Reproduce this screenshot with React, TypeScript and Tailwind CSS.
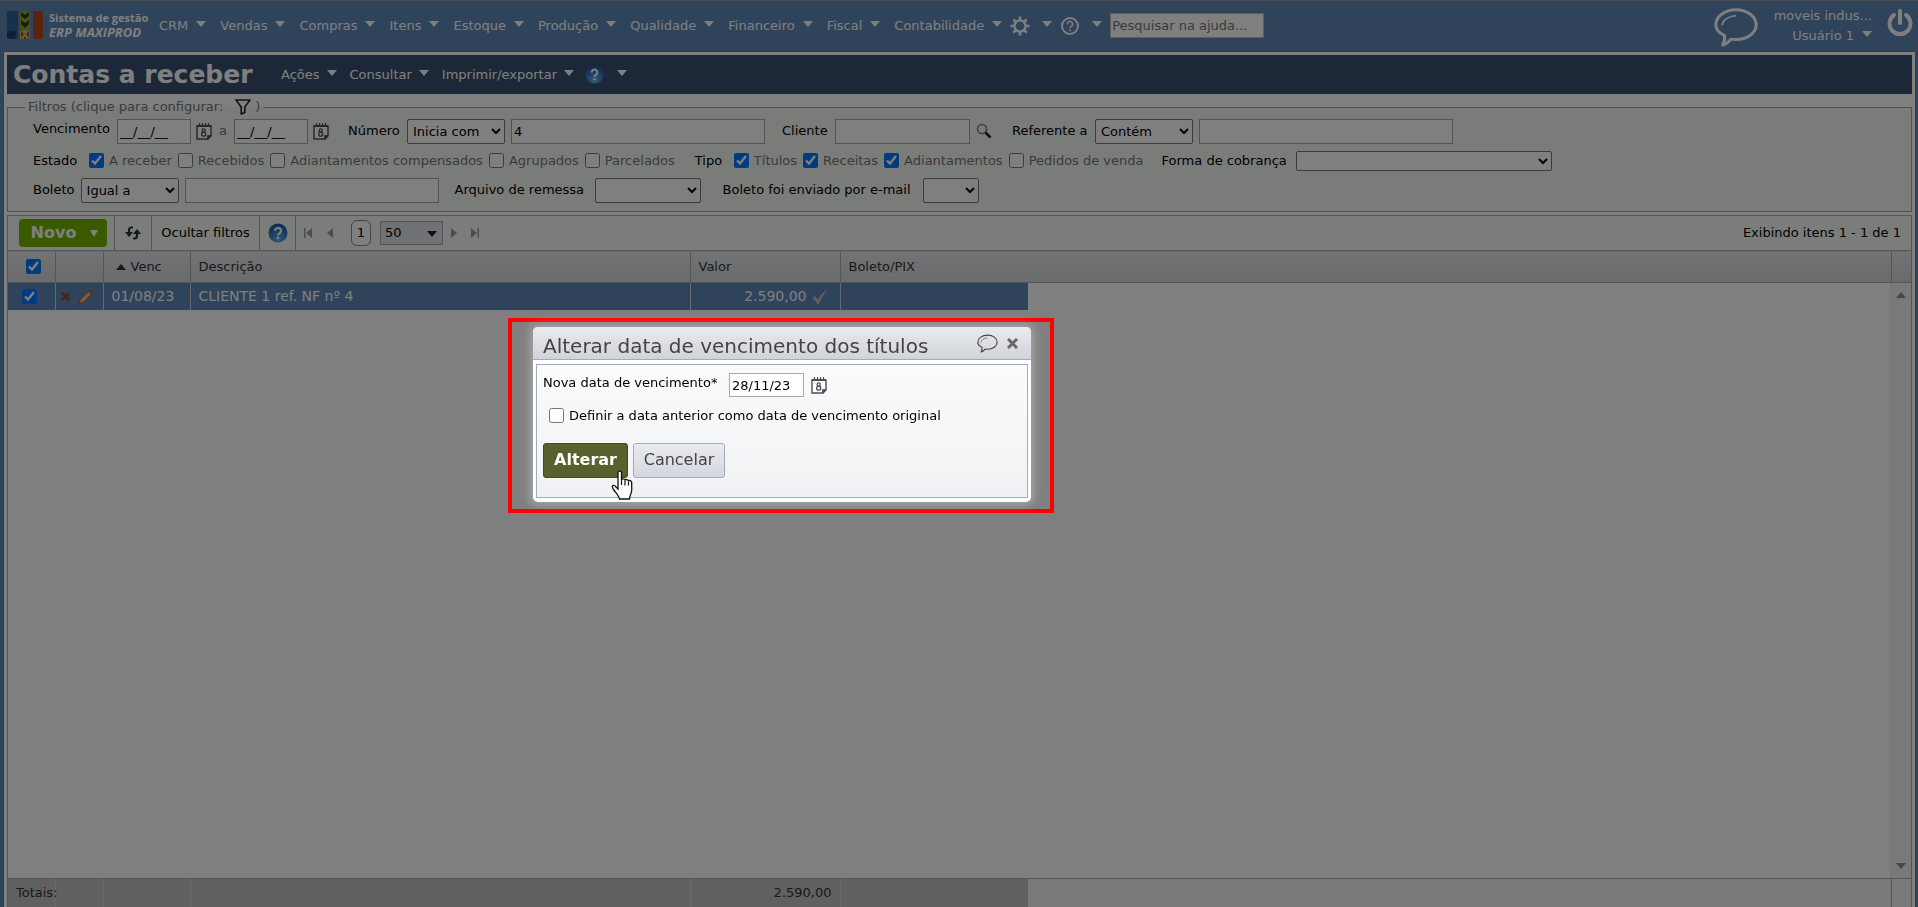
import { useState } from 'react'
import type { ReactNode } from 'react'
import clsx from 'clsx'

const MENU = [
  'CRM',
  'Vendas',
  'Compras',
  'Itens',
  'Estoque',
  'Produção',
  'Qualidade',
  'Financeiro',
  'Fiscal',
  'Contabilidade',
]

const PAGE_MENU = ['Ações', 'Consultar', 'Imprimir/exportar']

const ESTADOS = [
  { label: 'A receber', checked: true },
  { label: 'Recebidos', checked: false },
  { label: 'Adiantamentos compensados', checked: false },
  { label: 'Agrupados', checked: false },
  { label: 'Parcelados', checked: false },
]

const TIPOS = [
  { label: 'Títulos', checked: true },
  { label: 'Receitas', checked: true },
  { label: 'Adiantamentos', checked: true },
  { label: 'Pedidos de venda', checked: false },
]

function Caret({ className = '' }: { className?: string }) {
  return (
    <svg viewBox="0 0 10 6" className={clsx('w-[10px] h-[6px] shrink-0', className)} fill="currentColor">
      <path d="M0 0h10L5 6z" />
    </svg>
  )
}

function Logo() {
  return (
    <svg viewBox="0 0 36 28" className="w-9 h-7 shrink-0">
      <rect x="0" y="0" width="11" height="28" rx="2" fill="#2f6096" />
      <path d="M0 20h9v8H2a2 2 0 0 1-2-2z" fill="#1c4472" />
      <path d="M3 23h2v2H3zM6 21h2v2H6z" fill="#0c2c68" />
      <rect x="13" y="0" width="10" height="18" rx="2" fill="#96a81c" />
      <path d="M14 1l4 3 4-3v4l-4 3-4-3zM14 9l4 3 4-3v4l-4 4-4-4z" fill="#2c3a1c" />
      <rect x="13" y="19" width="10" height="9" rx="2" fill="#e0b050" />
      <path d="M14 20l3 3-3 4zM22 20l-3 3 3 4zM17 26h2v2h-2z" fill="#7a5a3c" />
      <rect x="26" y="0" width="10" height="28" rx="2" fill="#b8481c" />
    </svg>
  )
}

function GearIcon() {
  return (
    <svg viewBox="0 0 20 20" className="w-5 h-5" fill="none" stroke="currentColor">
      <circle cx="10" cy="10" r="5.600" strokeWidth="2.400" />
      <g strokeWidth="2.600">
        <path d="M10 .5v3.500M10 16v3.500M.5 10H4M16 10h3.500M3.300 3.300l2.400 2.400M14.300 14.300l2.400 2.400M3.300 16.700l2.400-2.400M14.300 5.700l2.400-2.400" />
      </g>
    </svg>
  )
}

function HelpOutline() {
  return (
    <svg viewBox="0 0 20 20" className="w-5 h-5" fill="none" stroke="currentColor" strokeWidth="2">
      <circle cx="10" cy="10" r="8" />
      <path d="M7.400 8.200a2.600 2.600 0 1 1 3.900 2.200c-.9.500-1.300.9-1.300 2" strokeWidth="1.500" />
      <path d="M10 13.600v1.700" strokeWidth="1.500" />
    </svg>
  )
}

function HelpBall({ className }: { className: string }) {
  return (
    <svg viewBox="0 0 20 20" className={className}>
      <defs>
        <radialGradient id="ball" cx="50%" cy="85%" r="80%">
          <stop offset="0" stopColor="#5fb4f0" />
          <stop offset="1" stopColor="#1c56a0" />
        </radialGradient>
      </defs>
      <circle cx="10" cy="10" r="9.500" fill="url(#ball)" />
      <path d="M7 7.800a3 3 0 1 1 4.500 2.600c-1 .6-1.500 1-1.500 2.100" fill="none" stroke="#fff" strokeWidth="2.200" />
      <circle cx="10" cy="15" r="1.300" fill="#fff" />
    </svg>
  )
}

function Bubble({ className, width = 3 }: { className: string; width?: number }) {
  return (
    <svg viewBox="0 0 44 39" className={className} fill="none" stroke="currentColor" strokeWidth={width}>
      <path
        d="M10.500 27.500C5 25 1.800 21 1.800 16.800 1.800 8.500 10.800 1.800 22 1.800s20.200 6.700 20.200 15S33.200 31.500 22 31.500c-1.800 0-3.500-.1-5-.4-2.200 2.800-5 4.900-8.300 6 1.600-2.900 2.300-6 1.800-9.600z"
        strokeLinejoin="round"
      />
      <path d="M8 17.500c.5-5 6-9.500 14-9.800" strokeWidth={width * 0.55} />
    </svg>
  )
}

function PowerIcon() {
  return (
    <svg viewBox="0 0 26 28" className="w-[26px] h-7" fill="none" stroke="currentColor" strokeWidth="4" strokeLinecap="round">
      <path d="M13 2v12" />
      <path d="M7 6a10.500 10.500 0 1 0 12 0" />
    </svg>
  )
}

function CalendarIcon() {
  return (
    <svg viewBox="0 0 16 17" className="w-4 h-[17px] shrink-0" fill="none" stroke="#4c4f58">
      <path d="M1 3v13h11l3-3V3z" fill="#fff" strokeWidth="1.400" />
      <path d="M1 3h14" strokeWidth="2" />
      <path d="M3.500 0v3M6.500 0v3M9.500 0v3M12.500 0v3" strokeWidth="1.200" />
      <path d="M11.500 16.500v-4H15z" fill="#4c4f58" strokeWidth=".8" />
      <circle cx="7.700" cy="7.500" r="1.600" strokeWidth="1.300" />
      <circle cx="7.700" cy="11.200" r="2" strokeWidth="1.300" />
    </svg>
  )
}

function SearchIcon() {
  return (
    <svg viewBox="0 0 16 16" className="w-4 h-4" fill="none">
      <circle cx="6" cy="6" r="4.500" stroke="#7f7f7f" strokeWidth="1.600" />
      <path d="M9.500 9.500l5 5" stroke="#222" strokeWidth="2.600" />
    </svg>
  )
}

function FunnelIcon() {
  return (
    <svg viewBox="0 0 16 16" className="w-4 h-4" fill="none" stroke="#1c2430" strokeWidth="1.600" strokeLinejoin="round">
      <path d="M1 1h14L9.800 8v5.500L6.200 15V8z" />
    </svg>
  )
}

function RefreshIcon() {
  return (
    <svg viewBox="0 0 18 14" className="w-[18px] h-[14px]" fill="none" stroke="#2b3340" strokeWidth="2.200">
      <path d="M9 1.500H7.500C6 1.500 5 2.500 5 4v5" />
      <path d="M1 6h8l-4 5z" fill="#2b3340" stroke="none" />
      <path d="M9 12.500h1.500c1.500 0 2.500-1 2.500-2.500V6" />
      <path d="M9 8h8l-4-5z" fill="#2b3340" stroke="none" />
    </svg>
  )
}

function Check({ label, checked, gray = true }: { label: string; checked: boolean; gray?: boolean }) {
  const [on, setOn] = useState(checked)
  return (
    <label className={clsx('flex items-center gap-[5px] whitespace-nowrap', gray && 'text-[#777]')}>
      <input type="checkbox" checked={on} onChange={() => setOn(!on)} className="w-[15px] h-[15px]" />
      {label}
    </label>
  )
}

interface FieldProps {
  label: string
  id: string
  className?: string
  labelClass?: string
  children: ReactNode
}

function Field({ label, id, className, labelClass, children }: FieldProps) {
  return (
    <div className={clsx('flex items-center gap-[6px] whitespace-nowrap', className)}>
      <label htmlFor={id} className={labelClass}>
        {label}
      </label>
      {children}
    </div>
  )
}

const inputCls = 'h-[25px] border border-[#a0a6b0] bg-white px-[2px] text-black'
const selectCls = 'h-[25px] border border-[#767676] rounded-[2px] bg-white px-px text-black'

function TopBar() {
  return (
    <header className="h-[51px] shrink-0 flex items-start border-t border-[#999] bg-[#5e86b6] pl-[7px] pr-[5px] text-white">
      <a href="#inicio" className="flex items-center gap-[6px] mt-[9px] w-[152px]">
        <Logo />
        <span className="font-['Open_Sans',sans-serif] text-[11px] leading-[15px] font-bold whitespace-nowrap">
          Sistema de gestão
          <br />
          <em className="text-[13px]">ERP MAXIPROD</em>
        </span>
      </a>
      <nav className="flex items-center h-[49px] gap-[14px]">
        {MENU.map((item) => (
          <button key={item} type="button" className="flex items-center gap-2">
            {item}
            <Caret className="mb-1" />
          </button>
        ))}
        <button type="button" aria-label="Configurações" className="flex items-center gap-3 -ml-[6px]">
          <GearIcon />
          <Caret className="mb-1" />
        </button>
        <button type="button" aria-label="Ajuda" className="flex items-center gap-3 -ml-[6px]">
          <HelpOutline />
          <Caret className="mb-1" />
        </button>
        <input
          aria-label="Pesquisar na ajuda"
          placeholder="Pesquisar na ajuda..."
          className="-ml-[6px] w-[154px] h-[25px] bg-white border border-[#bbb] px-px placeholder:text-[#757575]"
        />
      </nav>
      <div className="ml-auto flex items-start">
        <button type="button" aria-label="Mensagens" className="mt-[7px] mr-4">
          <Bubble className="w-[44px] h-[39px]" />
        </button>
        <button type="button" className="mt-[5px] flex flex-col items-end leading-5 mr-[15px]">
          <span>moveis indus...</span>
          <span className="flex items-center gap-2">
            Usuário 1
            <Caret className="mb-1" />
          </span>
        </button>
        <button type="button" aria-label="Sair" className="mt-2">
          <PowerIcon />
        </button>
      </div>
    </header>
  )
}

function TitleBar() {
  return (
    <div className="h-[39px] shrink-0 flex items-center bg-[#385070] text-white pl-[6px]">
      <h1 className="text-[25px] font-bold w-[268px] whitespace-nowrap">Contas a receber</h1>
      <div className="flex items-center gap-[13px]">
        {PAGE_MENU.map((item) => (
          <button key={item} type="button" className="flex items-center gap-[7px]">
            {item}
            <Caret className="mb-1" />
          </button>
        ))}
        <button type="button" aria-label="Ajuda" className="flex items-center gap-[13px] -ml-[2px]">
          <HelpBall className="w-[19px] h-[19px]" />
          <Caret className="mb-1" />
        </button>
      </div>
    </div>
  )
}

function DateInput({ id, label }: { id: string; label?: string }) {
  return (
    <>
      <input id={id} aria-label={label} defaultValue="__/__/__" className={clsx(inputCls, 'w-[74px]')} />
      <button type="button" aria-label="Abrir calendário" className="-ml-px">
        <CalendarIcon />
      </button>
    </>
  )
}

function Filters() {
  return (
    <fieldset className="mt-1 h-[114px] shrink-0 border border-[#a0a4a4] bg-[#f4f8f4] pl-[25px]">
      <legend className="-ml-2 px-[3px] h-[18px] flex items-center gap-2 text-[#777]">
        Filtros (clique para configurar:
        <button type="button" aria-label="Configurar filtros" className="flex items-center gap-1 ml-1">
          <FunnelIcon />
          )
        </button>
      </legend>
      <div className="flex h-[30px] items-center whitespace-nowrap">
        <Field label="Vencimento" id="venc-de" labelClass="w-[78px] pb-1" className="w-[315px]">
          <DateInput id="venc-de" />
          <span className="mx-px text-[#777]">a</span>
          <DateInput id="venc-ate" label="Vencimento até" />
        </Field>
        <Field label="Número" id="numero-op" labelClass="w-[53px]" className="w-[434px]">
          <select id="numero-op" className={clsx(selectCls, 'w-[98px]')}>
            <option>Inicia com</option>
          </select>
          <input aria-label="Número" defaultValue="4" className={clsx(inputCls, 'w-[254px]')} />
        </Field>
        <Field label="Cliente" id="cliente" labelClass="w-[47px]" className="w-[230px]">
          <input id="cliente" className={clsx(inputCls, 'w-[135px]')} />
          <button type="button" aria-label="Procurar cliente">
            <SearchIcon />
          </button>
        </Field>
        <Field label="Referente a" id="ref-op" labelClass="w-[77px]">
          <select id="ref-op" className={clsx(selectCls, 'w-[98px]')}>
            <option>Contém</option>
          </select>
          <input aria-label="Referente a" className={clsx(inputCls, 'w-[254px]')} />
        </Field>
      </div>
      <div className="flex h-[29px] items-center whitespace-nowrap">
        <span className="w-[56px]">Estado</span>
        <div className="flex items-center gap-[6px]">
          {ESTADOS.map((e) => (
            <Check key={e.label} {...e} />
          ))}
        </div>
        <span className="ml-5 w-[39px]">Tipo</span>
        <div className="flex items-center gap-[6px]">
          {TIPOS.map((t) => (
            <Check key={t.label} {...t} />
          ))}
        </div>
        <Field label="Forma de cobrança" id="forma" labelClass="w-[128px]" className="ml-[18px]">
          <select id="forma" className="h-5 w-[256px] border border-[#767676] rounded-[2px] bg-white" />
        </Field>
      </div>
      <div className="flex h-[30px] items-center gap-4 whitespace-nowrap">
        <Field label="Boleto" id="boleto-op">
          <select id="boleto-op" className={clsx(selectCls, 'w-[98px]')}>
            <option>Igual a</option>
          </select>
          <input aria-label="Boleto" className={clsx(inputCls, 'w-[254px]')} />
        </Field>
        <Field label="Arquivo de remessa" id="remessa" labelClass="w-[134px]">
          <select id="remessa" className={clsx(selectCls, 'w-[106px]')} />
        </Field>
        <Field label="Boleto foi enviado por e-mail" id="enviado" labelClass="w-[194px]" className="ml-[6px]">
          <select id="enviado" className={clsx(selectCls, 'w-14')} />
        </Field>
      </div>
    </fieldset>
  )
}

function PagerArrow({ d, label, className }: { d: string; label: string; className: string }) {
  return (
    <button type="button" aria-label={label} className={className}>
      <svg viewBox="0 0 9 10" className="w-[9px] h-[10px]" fill="#9298a4">
        <path d={d} />
      </svg>
    </button>
  )
}

function Toolbar() {
  return (
    <div className="h-[34px] shrink-0 flex items-center bg-[#f6faf6] pl-[11px]">
      <button
        type="button"
        className="w-[88px] h-7 rounded-[4px] bg-[#76b400] text-white text-[16px] font-bold flex items-center justify-center gap-[14px] pl-[3px]"
      >
        Novo
        <svg viewBox="0 0 8 7" className="w-2 h-[7px]" fill="currentColor">
          <path d="M0 0h8L4 7z" />
        </svg>
      </button>
      <button type="button" aria-label="Atualizar" className="ml-[7px] h-full w-[37px] border-l border-[#a8acb4] flex items-center justify-center">
        <RefreshIcon />
      </button>
      <button type="button" className="h-full w-[109px] border-x border-[#a8acb4]">
        Ocultar filtros
      </button>
      <button type="button" aria-label="Ajuda" className="h-full w-9 border-r border-[#a8acb4] flex items-center justify-center">
        <HelpBall className="w-5 h-5" />
      </button>
      <PagerArrow label="Primeira página" className="ml-[7px]" d="M1 0h1.500v10H1zM9 0v10L3 5z" />
      <PagerArrow label="Página anterior" className="ml-[14px]" d="M7 0v10L1 5z" />
      <button type="button" className="ml-4 w-5 h-[26px] rounded-[6px] border border-[#858a94] bg-white">
        1
      </button>
      <div className="relative ml-[9px]">
        <select aria-label="Itens por página" className="appearance-none w-[63px] h-6 pl-1 border border-[#a0a4b0] bg-[#e0e2e8]">
          <option>50</option>
        </select>
        <Caret className="absolute right-[6px] top-[10px] text-[#222] pointer-events-none" />
      </div>
      <PagerArrow label="Próxima página" className="ml-[7px]" d="M1 0v10l6-5z" />
      <PagerArrow label="Última página" className="ml-[12px]" d="M0 0v10l6-5zM6.500 0H8v10H6.500z" />
      <span className="ml-auto mr-[10px]">Exibindo itens 1 - 1 de 1</span>
    </div>
  )
}

function Columns({ last, scroll }: { last?: boolean; scroll?: boolean }) {
  return (
    <colgroup>
      <col className="w-[47px]" />
      <col className="w-12" />
      <col className="w-[87px]" />
      <col className="w-[500px]" />
      <col className="w-[150px]" />
      <col className={last ? 'w-[188px]' : ''} />
      {scroll && <col className="w-5" />}
    </colgroup>
  )
}

function Grid() {
  return (
    <section className="mt-[3px] flex-1 min-h-0 flex flex-col border border-b-0 border-[#a8acb4]">
      <Toolbar />
      <table className="w-full table-fixed border-collapse">
        <Columns scroll />
        <thead>
          <tr className="h-8 bg-linear-to-b from-[#e6e7ea] to-[#d4d6da] border-y border-[#a8acb4] text-[#333] [&>th]:border-r [&>th]:border-[#a8acb4] [&>th]:font-normal [&>th]:text-left [&>th]:px-2 [&>th:last-child]:border-r-0">
            <th>
              <input type="checkbox" aria-label="Selecionar todos" defaultChecked className="block ml-[10px] w-[15px] h-[15px]" />
            </th>
            <th aria-label="Ações" />
            <th>
              <button type="button" className="flex items-center gap-[5px] ml-1">
                <Caret className="rotate-180" />
                Venc
              </button>
            </th>
            <th>Descrição</th>
            <th>Valor</th>
            <th>Boleto/PIX</th>
            <th aria-hidden="true" />
          </tr>
        </thead>
      </table>
      <div className="flex-1 min-h-0 flex">
        <div className="flex-1 min-w-0">
          <table className="w-[1020px] table-fixed border-collapse">
            <Columns last />
            <tbody>
              <tr className="h-[27px] bg-[#5e86b6] text-white text-[14px] [&>td]:border-r [&>td]:border-[#d0d4da] [&>td]:px-2 [&>td:last-child]:border-r-0">
                <td>
                  <input type="checkbox" aria-label="Selecionar título" defaultChecked className="block ml-[6px] w-[15px] h-[15px]" />
                </td>
                <td>
                  <div className="flex items-center -ml-[3px] gap-2">
                    <button type="button" aria-label="Excluir">
                      <svg viewBox="0 0 9 9" className="w-[9px] h-[9px]" stroke="#a0441c" strokeWidth="2.600">
                        <path d="M1 1l7 7M8 1L1 8" />
                      </svg>
                    </button>
                    <button type="button" aria-label="Editar">
                      <svg viewBox="0 0 16 16" className="w-4 h-4">
                        <path d="M1 15l1.500-5L12 .8l3.200 2.800L6 13z" fill="#e8b880" stroke="#96602c" />
                        <path d="M12 .8l3.200 2.800-2 2-3.200-2.800z" fill="#b86440" />
                      </svg>
                    </button>
                  </div>
                </td>
                <td>01/08/23</td>
                <td>CLIENTE 1 ref. NF nº 4</td>
                <td>
                  <div className="flex items-center justify-end gap-[5px] mr-[3px]">
                    2.590,00
                    <svg viewBox="0 0 17 15" className="w-[17px] h-[15px]" fill="#b9bdc4">
                      <path d="M0 9l3-2 3 3.500C8 6 11 3 16 0c-4 4.500-6.500 9-9 15H5C4 12.500 2 10.500 0 9z" />
                    </svg>
                  </div>
                </td>
                <td />
              </tr>
            </tbody>
          </table>
        </div>
        <div className="w-[21px] bg-[#f0f4f2] flex flex-col items-center justify-between py-[9px] text-[#8a8e96]">
          <Caret className="rotate-180" />
          <Caret />
        </div>
      </div>
      <div className="h-[29px] shrink-0 flex border-t border-[#a8acb4] bg-[#f0f4f2]">
        <table className="w-[1020px] table-fixed border-collapse">
          <Columns last />
          <tbody>
            <tr className="h-7 bg-[#c0c0c0] text-[#333] [&>td]:border-r [&>td]:border-[#d2d2d2] [&>td]:px-2 [&>td:last-child]:border-r-0">
              <td className="whitespace-nowrap">Totais:</td>
              <td />
              <td />
              <td />
              <td className="text-right">2.590,00</td>
              <td />
            </tr>
          </tbody>
        </table>
        <div className="ml-auto w-5 border-l border-[#a8acb4]" />
      </div>
    </section>
  )
}

function HandCursor() {
  return (
    <svg viewBox="0 0 22 30" className="absolute left-[68px] top-[27px] w-[22px] h-[30px] pointer-events-none">
      <path
        d="M7 2.500C7 .6 10.500.6 10.500 2.500V10c0-1.500 3.500-1.500 3.500.5 0-1.500 3.500-1.300 3.500.8 0-1.300 3.200-1 3.200 1.200V20c0 3-1.700 4.500-2.200 9H8.500c-.5-3-3.500-6-6-9.500-3-4.500.5-5 2.500-2.500l2 2z"
        fill="#fff"
        stroke="#111"
        strokeWidth="1.300"
      />
      <path d="M10.500 10v5M14 10.500v5M17.500 11.500v4" stroke="#111" strokeWidth="1.200" />
    </svg>
  )
}

function DueDateDialog() {
  return (
    <div className="fixed left-[508px] top-[318px] w-[546px] border-4 border-[#ff0000] pl-[21px] pr-[19px] pt-[5px] pb-[7px]">
      <div
        role="dialog"
        aria-labelledby="dialog-title"
        className="rounded-[5px] bg-white shadow-[0_0_8px_3px_rgba(255,255,255,0.3)]"
      >
        <div className="h-[33px] rounded-t-[5px] border-b border-[#a0acbc] bg-linear-to-b from-[#e9ebed] to-[#d0d3da] flex items-center pl-[10px] pr-[13px] text-[#444]">
          <h2 id="dialog-title" className="text-[20px] pt-[5px]">
            Alterar data de vencimento dos títulos
          </h2>
          <button type="button" aria-label="Comentários" className="ml-auto">
            <Bubble className="w-[21px] h-[19px]" width={2.4} />
          </button>
          <button type="button" aria-label="Fechar" className="ml-[9px]">
            <svg viewBox="0 0 11 11" className="w-[11px] h-[11px]" stroke="#666" strokeWidth="3">
              <path d="M1 1l9 9M10 1l-9 9" />
            </svg>
          </button>
        </div>
        <div className="px-[3px] py-1">
          <form
            onSubmit={(e) => e.preventDefault()}
            className="h-[134px] border border-[#a0acbc] bg-linear-to-b from-[#fafcfb] to-[#f0f1f4] pl-[6px] pt-2 text-[13px] text-black"
          >
            <div className="flex items-center gap-[7px]">
              <label htmlFor="nova-data" className="w-[179px] pb-1">
                Nova data de vencimento*
              </label>
              <input id="nova-data" defaultValue="28/11/23" className="w-[75px] h-6 border border-[#a0acbc] bg-white px-[2px]" />
              <button type="button" aria-label="Abrir calendário">
                <CalendarIcon />
              </button>
            </div>
            <div className="mt-[9px] ml-[6px]">
              <Check label="Definir a data anterior como data de vencimento original" checked={false} gray={false} />
            </div>
            <div className="relative mt-[17px] flex gap-[5px] text-[16px]">
              <button type="submit" className="w-[85px] h-[35px] rounded-[3px] border border-[#44491f] bg-[#595f2d] text-white font-bold">
                Alterar
              </button>
              <button
                type="button"
                className="w-[92px] h-[35px] rounded-[3px] border border-[#a0acbc] bg-linear-to-b from-[#e9ebed] to-[#d3d7dd] text-[#444]"
              >
                Cancelar
              </button>
              <HandCursor />
            </div>
          </form>
        </div>
      </div>
    </div>
  )
}

export default function App() {
  return (
    <div className="h-screen flex flex-col overflow-hidden bg-[#5e86b6] font-['DejaVu_Sans',Verdana,sans-serif] text-[13px] text-black">
      <TopBar />
      <main className="flex-1 min-h-0 flex flex-col ml-[3px] mr-[2px] border-t border-x border-[#777] bg-white pt-[3px] px-[3px]">
        <TitleBar />
        <Filters />
        <Grid />
      </main>
      <div className="fixed inset-0 bg-black/50" />
      <DueDateDialog />
    </div>
  )
}
